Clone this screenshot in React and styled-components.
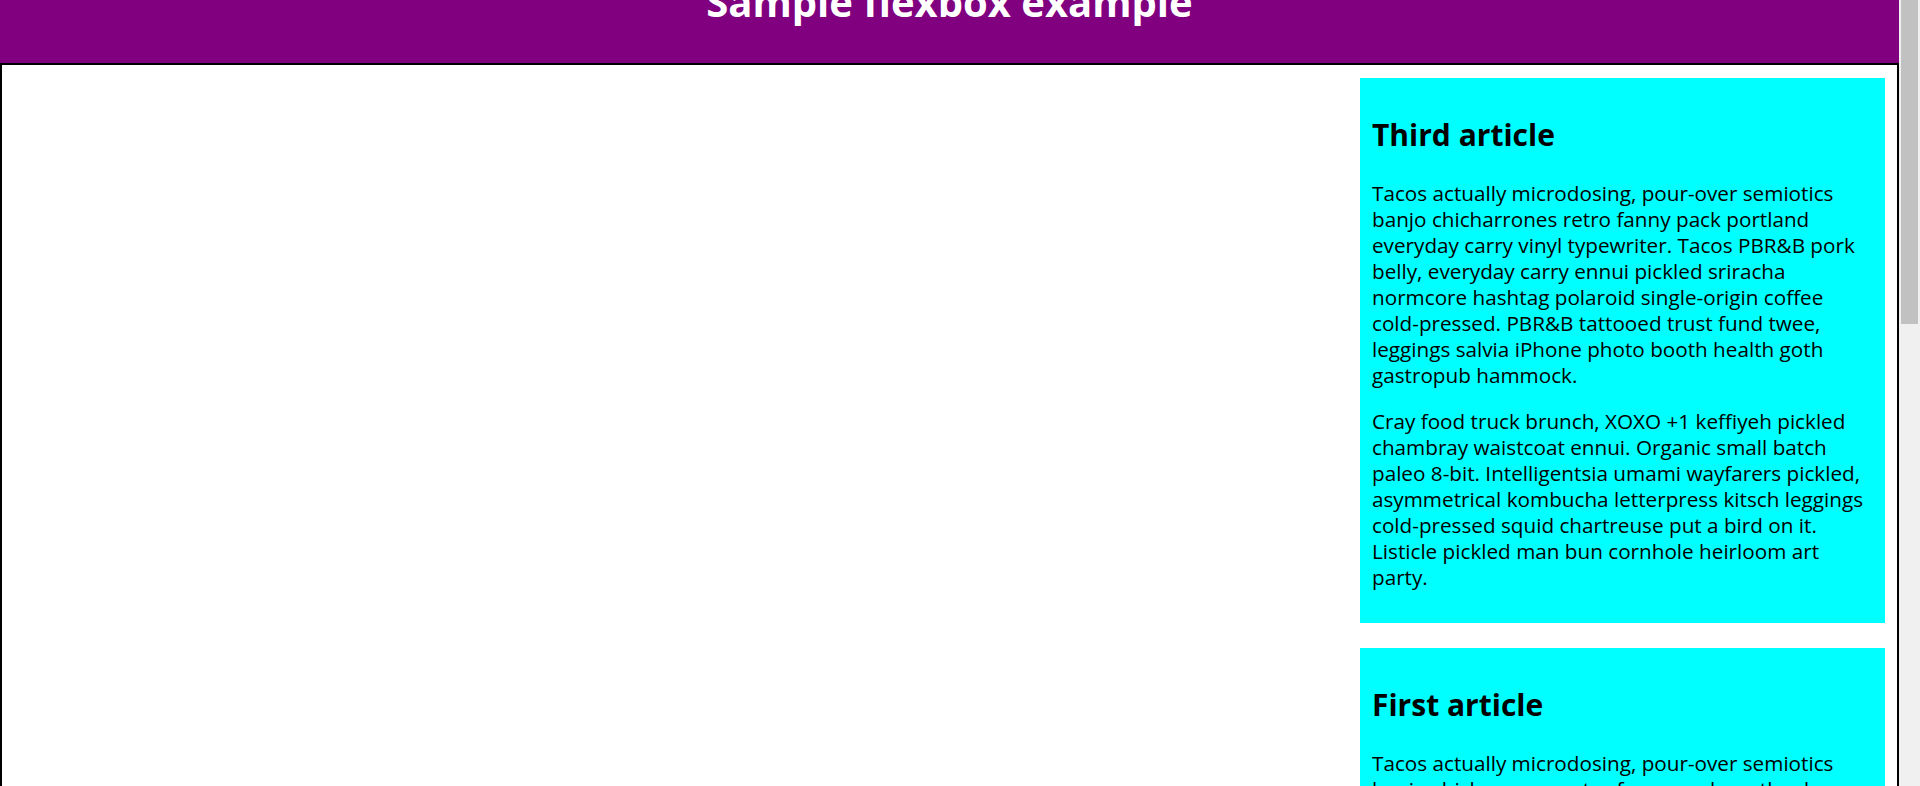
import React from "react";
import styled, { createGlobalStyle } from "styled-components";

const GlobalStyle = createGlobalStyle`
  html, body {
    margin: 0;
    padding: 0;
    height: 100%;
    overflow: hidden;
  }
  body {
    font-family: "Open Sans", "Noto Sans", sans-serif;
    font-size: 20.7px;
    color: #000;
  }
  #root {
    height: 100%;
  }
`;

// the window: page on the left, scroll rail on the right
const Frame = styled.div`
  display: flex;
  height: 100vh;
`;

const Page = styled.div`
  flex: 1;
  min-width: 0;
  overflow: hidden;
  background: #fff;
`;

const Rail = styled.div`
  width: 21px;
  flex-shrink: 0;
  background: #f0f0f0;
  padding: 0 2px;
  box-sizing: border-box;
`;

const Thumb = styled.div`
  height: 324px;
  background: #c1c1c1;
`;

const Header = styled.header`
  display: flow-root;
  background: purple;
  height: 63px;
`;

const Title = styled.h1`
  margin: -18.5px 0 0;
  font-size: 40px;
  line-height: 40px;
  font-weight: 700;
  color: white;
  text-align: center;
`;

const Section = styled.section`
  display: flex;
  flex-direction: column;
  align-items: flex-end;
  border: 2px solid #000;
`;

const Article = styled.article`
  width: 500px;
  padding: 12.5px;
  margin: 12.5px;
  background: aqua;

  h2 {
    font-size: 30px;
    line-height: 40px;
    font-weight: 700;
    margin: 25px 0;
  }
  p {
    line-height: 26px;
    margin: 20px 0;
  }
`;

const tacos =
  "Tacos actually microdosing, pour-over semiotics banjo chicharrones retro fanny pack portland everyday carry vinyl typewriter. Tacos PBR&B pork belly, everyday carry ennui pickled sriracha normcore hashtag polaroid single-origin coffee cold-pressed. PBR&B tattooed trust fund twee, leggings salvia iPhone photo booth health goth gastropub hammock.";

const cray =
  "Cray food truck brunch, XOXO +1 keffiyeh pickled chambray waistcoat ennui. Organic small batch paleo 8-bit. Intelligentsia umami wayfarers pickled, asymmetrical kombucha letterpress kitsch leggings cold-pressed squid chartreuse put a bird on it. Listicle pickled man bun cornhole heirloom art party.";

const articles = [
  { title: "Third article", paras: [tacos, cray] },
  { title: "First article", paras: [tacos] },
  { title: "Second article", paras: [tacos] },
];

export default function App() {
  return (
    <>
      <GlobalStyle />
      <Frame>
        <Page>
          <Header>
            <Title>Sample flexbox example</Title>
          </Header>
          <Section>
            {articles.map((a) => (
              <Article key={a.title}>
                <h2>{a.title}</h2>
                {a.paras.map((p, i) => (
                  <p key={i}>{p}</p>
                ))}
              </Article>
            ))}
          </Section>
        </Page>
        <Rail>
          <Thumb />
        </Rail>
      </Frame>
    </>
  );
}
